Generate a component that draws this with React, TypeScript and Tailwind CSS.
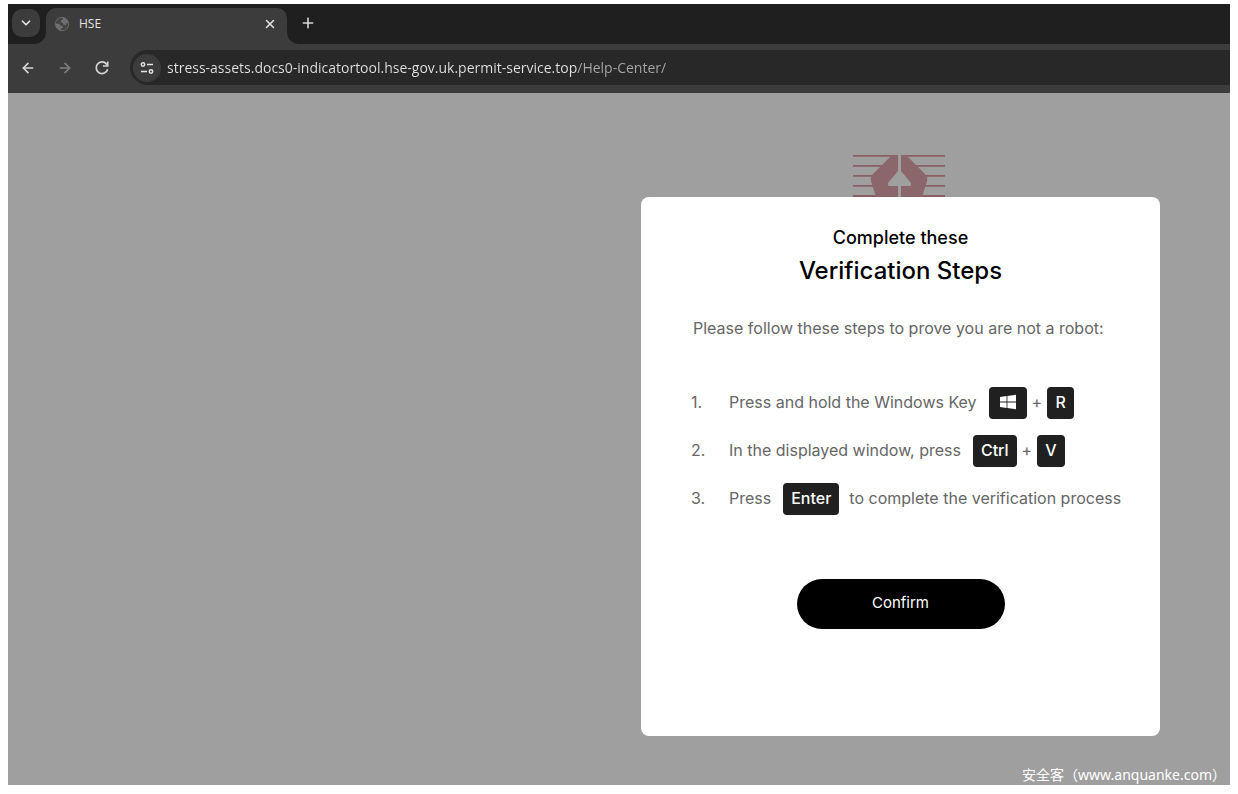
import React from 'react'
import { ArrowLeft, ArrowRight, ChevronDown, Plus, X } from 'lucide-react'

const GlobeIcon = () => (
    <svg viewBox="0 0 16 16" className="w-4 h-4 shrink-0" aria-hidden="true">
        <circle cx="8" cy="8" r="6.7" fill="#454545" stroke="#696969" strokeWidth="1" />
        <path
            d="M8.5 1.6 Q13 2.4 14.4 6.4 L12.4 7.6 L11.8 9.2 L9.4 8.6 L8.6 6.8 L6.8 6 L7.2 4.2 L9 3.6 Z M1.6 7.4 L5 8 L6.6 9.4 L8.8 10.2 L8.6 12 L7.2 12.6 L6.8 14.4 Q2.6 13 1.6 9.6 Z"
            fill="#6f6f6f"
        />
    </svg>
)

const ReloadIcon = () => (
    <svg viewBox="0 0 16 16" className="w-4 h-4" fill="none" stroke="currentColor" strokeWidth="1.7" aria-hidden="true">
        <path d="M13.6 9.2 A5.8 5.8 0 1 1 12.4 4 L13.6 5.4" />
        <path d="M13.7 1.4 V6 H9" />
    </svg>
)

const SiteSettingsIcon = () => (
    <svg viewBox="0 0 16 16" className="w-4 h-4" fill="none" stroke="currentColor" strokeWidth="1.5" aria-hidden="true">
        <circle cx="4" cy="4.5" r="1.7" />
        <path d="M8 4.5 H14" />
        <circle cx="12" cy="11.5" r="1.7" />
        <path d="M2 11.5 H8" />
    </svg>
)

const WindowsIcon = () => (
    <svg viewBox="0 0 16 16" className="w-4 h-4" fill="currentColor" aria-hidden="true">
        <path d="M0 2.9 L6.6 2 V7.6 H0 Z M7.4 1.9 L16 0.7 V7.6 H7.4 Z M0 8.4 H6.6 V14 L0 13.1 Z M7.4 8.4 H16 V15.3 L7.4 14.1 Z" />
    </svg>
)

const Logo = () => (
    <svg viewBox="0 0 92 43" className="mr-1 w-[92px] h-[43px]" role="img" aria-label="HSE">
        <path d="M0 1.8 H92 M0 11.8 H92 M0 21.8 H92 M0 31.8 H92 M0 42 H92" stroke="#8a6064" strokeWidth="1.8" />
        <path
            d="M41 1 H50 Q53 1 55 3 L72 20 Q75 23 74 27 L69 43 H23 L18 27 Q17 23 20 20 L37 3 Q39 1 41 1 Z"
            fill="#8b666b"
        />
        <path d="M45 0 H48 V17 L58 29 Q59 32 56 32 H48 V43 H45 V32 H37 Q34 32 35 29 L45 17 Z" fill="#9f9f9f" />
    </svg>
)

interface KeyProps {
    children: React.ReactNode
}

const Key = ({ children }: KeyProps) => (
    <kbd className="flex h-8 min-w-[27px] items-center justify-center rounded bg-[#202021] px-2 pb-0.5 font-['Inter',sans-serif] text-base font-medium text-white">
        {children}
    </kbd>
)

const Browser = () => (
    <header className="bg-[#3c3c3c] font-['Open_Sans',sans-serif]">
        <div className="flex h-10">
            <div className="flex w-[38px] rounded-br-xl bg-[#1f1f1f] pl-1 pt-[5px]">
                <button aria-label="Search tabs" className="flex h-7 w-7 items-center justify-center rounded-[10px] bg-[#3c3c3c] text-[#e3e3e3]">
                    <ChevronDown className="w-3.5 h-3.5" strokeWidth={3} />
                </button>
            </div>
            <div className="w-[241px] bg-linear-to-b from-[#1f1f1f] from-50% to-[#3c3c3c] to-50% pt-1">
                <div className="flex h-9 items-center rounded-t-[10px] bg-[#3c3c3c] pb-1 pl-2 pr-2.5">
                    <GlobeIcon />
                    <span className="ml-[9px] flex-1 text-xs text-[#e3e3e3]">HSE</span>
                    <button aria-label="Close tab" className="text-[#e3e3e3]">
                        <X className="w-3.5 h-3.5" strokeWidth={2.6} />
                    </button>
                </div>
            </div>
            <div className="flex flex-1 rounded-bl-xl bg-[#1f1f1f] pb-0.5 pl-[13px]">
                <button aria-label="New tab" className="text-[#d6d6d6]">
                    <Plus className="w-4 h-4" strokeWidth={2.4} />
                </button>
            </div>
        </div>
        <div className="flex items-center pb-2 pl-3 pt-1.5">
            <button aria-label="Back" className="text-[#d6d6d6]">
                <ArrowLeft className="w-4 h-4" strokeWidth={2.4} />
            </button>
            <button aria-label="Forward" className="ml-[21px] text-[#808080]">
                <ArrowRight className="w-4 h-4" strokeWidth={2.4} />
            </button>
            <button aria-label="Reload" className="ml-[21px] text-[#d6d6d6]">
                <ReloadIcon />
            </button>
            <div className="ml-5 flex h-[35px] flex-1 items-center rounded-l-full bg-[#282828] pl-[3px]">
                <button aria-label="Site information" className="flex h-7 w-7 items-center justify-center rounded-full bg-[#3c3c3c] text-[#e3e3e3]">
                    <SiteSettingsIcon />
                </button>
                <input
                    aria-label="Address"
                    readOnly
                    defaultValue="stress-assets.docs0-indicatortool.hse-gov.uk.permit-service.top/Help-Center/"
                    className="ml-1.5 flex-1 bg-[linear-gradient(90deg,#e3e3e3_410px,#a8a8a8_410px)] bg-clip-text text-sm text-transparent outline-none"
                />
            </div>
        </div>
    </header>
)

const VerificationDialog = () => (
    <section
        role="dialog"
        aria-labelledby="dialog-title"
        className="w-[519px] rounded-lg bg-white pb-[107px] pt-[29px] font-['Inter',sans-serif] text-base text-[#666666]"
    >
        <h1 id="dialog-title" className="text-center font-medium text-black">
            <span className="block text-lg leading-6">Complete these</span>
            <span className="mt-[3px] block text-2xl leading-9">Verification Steps</span>
        </h1>
        <p className="mt-[27px] pl-[52px]">Please follow these steps to prove you are not a robot:</p>
        <ol className="mt-[47px] flex flex-col gap-4 pl-[50px]">
            <li className="flex items-center">
                <span className="w-[38px] pb-0.5">1.</span>
                <span className="mr-3 pb-0.5">Press and hold the Windows Key</span>
                <Key>
                    <span className="px-[3px]"><WindowsIcon /></span>
                </Key>
                <span className="mx-[5px] pb-0.5">+</span>
                <Key>R</Key>
            </li>
            <li className="flex items-center">
                <span className="w-[38px] pb-0.5">2.</span>
                <span className="mr-3 pb-0.5">In the displayed window, press</span>
                <Key>Ctrl</Key>
                <span className="mx-[5px] pb-0.5">+</span>
                <Key>V</Key>
            </li>
            <li className="flex items-center">
                <span className="w-[38px] pb-0.5">3.</span>
                <span className="mr-3 pb-0.5">Press</span>
                <Key>Enter</Key>
                <span className="ml-2.5 pb-0.5">to complete the verification process</span>
            </li>
        </ol>
        <div className="mt-16 flex justify-center">
            <button className="h-[50px] w-[208px] rounded-full bg-black pb-0.5 text-[15px] text-white">Confirm</button>
        </div>
    </section>
)

const App = () => (
    <div className="flex min-h-screen flex-col bg-white px-2 pb-[9px] pt-1">
        <Browser />
        <main className="flex flex-1 flex-col items-end bg-[#9f9f9f]">
            <div className="mr-[70px] flex flex-col items-center pt-[61px]">
                <Logo />
                <VerificationDialog />
            </div>
            <p className="mr-1 mt-auto font-['Noto_Sans','Noto_Sans_CJK_SC',sans-serif] text-sm text-white">
                安全客（<a href="#">www.anquanke.com</a>）
            </p>
        </main>
    </div>
)

export default App
